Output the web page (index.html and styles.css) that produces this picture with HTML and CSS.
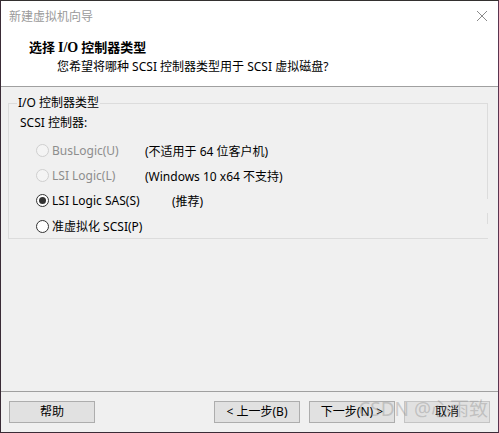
FILE: index.html
```html
<!DOCTYPE html>
<html lang="zh-CN">
<head>
<meta charset="utf-8">
<link rel="stylesheet" href="styles.css">
</head>
<body>
<div class="window">
  <div class="titlebar">
    <span class="title">新建虚拟机向导</span>
    <svg class="close" width="12" height="12" viewBox="0 0 12 12"><path d="M1 1 L11 11 M11 1 L1 11" stroke="#8a8a8a" stroke-width="1" fill="none"/></svg>
  </div>
  <div class="header">
    <div class="heading">选择 <span class="serif">I/O</span> 控制器类型</div>
    <div class="subtitle">您希望将哪种 SCSI 控制器类型用于 SCSI 虚拟磁盘?</div>
  </div>
  <div class="body">
    <fieldset class="group">
      <legend>I/O 控制器类型</legend>
      <div class="caption">SCSI 控制器:</div>
      <div class="row disabled">
        <span class="radio"></span><span class="label">BusLogic(U)</span><span class="note">(不适用于 64 位客户机)</span>
      </div>
      <div class="row disabled">
        <span class="radio"></span><span class="label">LSI Logic(L)</span><span class="note">(Windows 10 x64 不支持)</span>
      </div>
      <div class="row">
        <span class="radio checked"></span><span class="label">LSI Logic SAS(S)</span><span class="note rec">(推荐)</span>
      </div>
      <div class="row">
        <span class="radio"></span><span class="label">准虚拟化 SCSI(P)</span>
      </div>
      <span class="gap gap1"></span>
      <span class="gap gap2"></span>
    </fieldset>
  </div>
  <div class="footer">
    <button class="btn">帮助</button>
    <div class="spacer"></div>
    <button class="btn">&lt; 上一步(B)</button>
    <button class="btn">下一步(N) &gt;</button>
    <button class="btn light">取消</button>
    <span class="watermark">CSDN @心雨致</span>
  </div>
</div>
</body>
</html>
```
FILE: styles.css
```css
* { box-sizing: border-box; }
html, body { margin: 0; padding: 0; }
body {
  width: 499px;
  height: 433px;
  overflow: hidden;
  font-family: "Noto Sans", "Noto Sans CJK SC", sans-serif;
  font-size: 12px;
  color: #000;
}
.window {
  width: 499px;
  height: 433px;
  display: flex;
  flex-direction: column;
  background: #f0f0f0;
  border-top: 1px solid #33302f;
  border-left: 1px solid #3a2b36;
  border-right: 1px solid #5a3550;
  border-bottom: 1px solid #3a2b36;
  position: relative;
}
.titlebar {
  height: 29px;
  background: #fff;
  display: flex;
  align-items: center;
  justify-content: space-between;
  padding: 0 10px 0 8px;
}
.title { color: #9a9a9a; font-size: 12px; }
.header {
  height: 57px;
  background: #fff;
  padding-top: 8px;
  border-bottom: 1px solid #a0a0a0;
}
.heading {
  font-family: "Noto Sans CJK SC", sans-serif;
  font-weight: bold;
  font-size: 13px;
  line-height: 18px;
  padding-left: 28px;
}
.serif { font-family: "Liberation Serif", serif; font-size: 14px; }
.subtitle {
  line-height: 18px;
  padding-left: 56px;
  margin-top: 1px;
}
.body {
  flex: 1;
  padding: 8px 10px 0 7px;
}
.group {
  position: relative;
  margin: 0;
  padding: 0 0 0 11px;
  height: 144px;
  border: 1px solid #dcdcdc;
  border-radius: 0;
}
.group legend {
  padding: 0 1px 0 1px;
  margin-left: -3px;
  line-height: 16px;
}
.caption {
  line-height: 18px;
  margin-top: 3px;
  margin-bottom: 6px;
}
.row {
  display: flex;
  align-items: center;
  height: 25px;
  padding-left: 16px;
}
.row:last-of-type { height: 26px; }
.radio {
  width: 13px;
  height: 13px;
  border: 1px solid #333;
  border-radius: 50%;
  background: #fff;
  flex: none;
  display: flex;
  align-items: center;
  justify-content: center;
}
.radio.checked::after {
  content: "";
  width: 7px;
  height: 7px;
  border-radius: 50%;
  background: #333;
}
.label { margin-left: 3px; width: 93px; }
.row .note.rec { margin-left: 27px; }
.disabled { color: #8d8d8d; }
.disabled .note { color: #000; }
.disabled .radio { border-color: #cfcfcf; background: #f4f4f4; }
.gap {
  position: absolute;
  right: -1px;
  width: 1px;
  background: #f0f0f0;
}
.gap1 { top: 88px; height: 14px; }
.gap2 { top: 113px; height: 14px; }
.footer {
  position: relative;
  height: 41px;
  border-top: 1px solid #a0a0a0;
  display: flex;
  align-items: flex-start;
  padding: 9px 8px 0 8px;
  gap: 9px;
}
.spacer { flex: 1; }
.btn {
  width: 86px;
  height: 22px;
  background: #e1e1e1;
  border: 1px solid #adadad;
  font-family: "Noto Sans", "Noto Sans CJK SC", sans-serif;
  font-size: 12px;
  color: #000;
  padding: 0;
  line-height: 18px;
}
.btn.light { border-color: #c4c4c4; }
.watermark {
  position: absolute;
  right: 10px;
  top: 5px;
  font-family: "Noto Sans", "Noto Sans CJK SC", sans-serif;
  font-size: 19px;
  line-height: 24px;
  color: rgba(140,140,140,0.4);
  white-space: nowrap;
}
```
